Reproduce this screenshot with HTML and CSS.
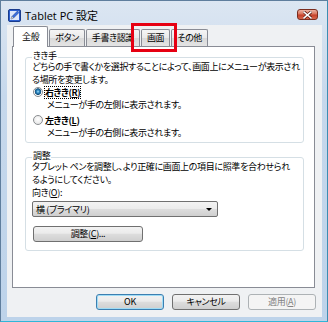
FILE: index.html
```html
<!DOCTYPE html>
<html lang="ja">
<head>
  <meta charset="UTF-8" />
  <title>Tablet PC 設定</title>
  <link rel="stylesheet" href="styles.css">
</head>
<body>
  <div class="window">
    <div class="titlebar">
      <svg class="app-icon" width="13" height="13" viewBox="0 0 13 13">
        <rect x="0.5" y="0.5" width="12" height="12" rx="1.5" fill="#2c5fcf" stroke="#1a3c8c"/>
        <rect x="2" y="2" width="9" height="9" fill="#dfe8fb"/>
        <path d="M3 10 L4 7.5 L9.5 2 L11 3.5 L5.5 9 Z" fill="#3a6fe0" stroke="#1a3c8c" stroke-width="0.6"/>
        <path d="M3 10 L4 7.5 L5.5 9 Z" fill="#f3e2b0"/>
      </svg>
      <span class="title">Tablet PC 設定</span>
      <div class="close">
        <svg width="9" height="8" viewBox="0 0 9 8">
          <path d="M1 1 L8 7 M8 1 L1 7" stroke="#5a1a10" stroke-width="3" stroke-linecap="square"/>
          <path d="M1 1 L8 7 M8 1 L1 7" stroke="#fff" stroke-width="1.6" stroke-linecap="square"/>
        </svg>
      </div>
    </div>

    <div class="client">
      <div class="tabs">
        <div class="tab active">全般</div>
        <div class="tab">ボタン</div>
        <div class="tab">手書き認識</div>
        <div class="tab">画面</div>
        <div class="tab">その他</div>
      </div>

      <div class="panel">
        <fieldset class="group">
          <legend>きき手</legend>
          <p class="text first">どちらの手で書くかを選択することによって、画面上にメニューが表示され<br>る場所を変更します。</p>
          <div class="radio">
            <span class="dot checked"></span>
            <span class="radio-label focused">右きき(<u>R</u>)</span>
          </div>
          <p class="desc">メニューが手の左側に表示されます。</p>
          <div class="radio second">
            <span class="dot"></span>
            <span class="radio-label">左きき(<u>L</u>)</span>
          </div>
          <p class="desc">メニューが手の右側に表示されます。</p>
        </fieldset>

        <fieldset class="group adjust">
          <legend>調整</legend>
          <p class="text first">タブレット ペンを調整し、より正確に画面上の項目に照準を合わせられ<br>るようにしてください。</p>
          <p class="text">向き(<u>O</u>):</p>
          <div class="select">
            <span>横 (プライマリ)</span>
            <span class="arrow"></span>
          </div>
          <div class="btn calibrate">調整(<u>C</u>)...</div>
        </fieldset>
      </div>

      <div class="actions">
        <div class="btn default">OK</div>
        <div class="btn">キャンセル</div>
        <div class="btn disabled">適用(<u>A</u>)</div>
      </div>
    </div>

    <!-- red marker around the 画面 tab -->
    <div class="mark"></div>
  </div>
</body>
</html>
```

FILE: styles.css
```css
body {
  margin: 0;
  font-family: "Noto Sans CJK JP", sans-serif;
  font-size: 9px;
  letter-spacing: -0.35px;
  font-feature-settings: "palt" 1;
  font-variant-east-asian: proportional-width;
  color: #000;
}

.window {
  position: relative;
  width: 328px;
  height: 322px;
  box-sizing: border-box;
  border: 1px solid #5f7e9d;
  border-right-color: #3d8db2;
  border-bottom-color: #2fb6d8;
  background: linear-gradient(#dce6f2, #c6d8ec 30%, #bdd3ea);
  padding: 0 5px 4px 6px;
  display: flex;
  flex-direction: column;
}

.titlebar {
  height: 24px;
  display: flex;
  align-items: flex-start;
  padding-top: 8px;
  box-sizing: border-box;
}

.app-icon {
  margin-left: 1px;
}

.title {
  margin-left: 4px;
  font-family: "Open Sans", "Noto Sans CJK JP", sans-serif;
  font-size: 11px;
  line-height: 13px;
  letter-spacing: normal;
  font-feature-settings: normal;
}

.close {
  margin-left: auto;
  margin-right: 4px;
  width: 21px;
  height: 11px;
  box-sizing: border-box;
  border: 1px solid #7a2d1f;
  border-radius: 3px;
  background: linear-gradient(#edb3a3, #d9735b 45%, #c4402a 55%, #d8654a);
  display: flex;
  align-items: center;
  justify-content: center;
}

.client {
  flex: 1;
  background: #eff1f3;
  padding: 1px 7px 0 5px;
  display: flex;
  flex-direction: column;
}

/* tab strip */
.tabs {
  display: flex;
  align-items: flex-end;
  height: 20px;
  padding-left: 1px;
}

.tab {
  height: 17px;
  box-sizing: border-box;
  border: 1px solid #898c95;
  border-bottom: none;
  border-radius: 2px 2px 0 0;
  padding: 0 5px;
  line-height: 15px;
  background: linear-gradient(#f5f5f5, #e9e9e9 50%, #d9d9d9 51%, #e4e4e4);
  margin-left: 1px;
}

.tab.active {
  height: 21px;
  margin-bottom: -1px;
  margin-left: 0;
  background: #fff;
  position: relative;
  z-index: 1;
  padding: 2px 8px 0;
}

.panel {
  height: 242px;
  box-sizing: border-box;
  border: 1px solid #898c95;
  background: #fff;
  padding: 3px 10px 0 12px;
}

.group {
  margin: 0;
  min-width: 0;
  border: 1px solid #d5dfe5;
  border-radius: 3px;
  padding: 0 6px 3px 6px;
}

.group legend {
  padding: 0 1px 3px;
  line-height: 11px;
}

.group.adjust {
  margin-top: 7px;
  padding-bottom: 8px;
}

.text,
.desc {
  margin: 0;
  line-height: 13px;
  white-space: nowrap;
}

.text.first {
  margin-top: -4px;
}

.desc {
  padding-left: 15px;
}

.radio {
  display: flex;
  align-items: center;
  height: 12px;
  margin-left: 1px;
}

.radio.second {
  margin-top: 3px;
}

.dot {
  width: 10px;
  height: 10px;
  box-sizing: border-box;
  border: 1px solid #8a8d90;
  border-radius: 50%;
  background: radial-gradient(circle at 50% 40%, #fff, #e0e0e0);
  margin-right: 2px;
}

.dot.checked {
  background: radial-gradient(circle at 50% 45%, #a8e3fb 0, #2c86c0 1.5px, #14507c 3px, #fff 3.6px, #e2e2e2);
}

.radio-label {
  font-weight: bold;
  line-height: 11px;
}

.radio-label.focused {
  outline: 1px dotted #000;
}

.select {
  width: 186px;
  height: 16px;
  box-sizing: border-box;
  margin-top: 2px;
  border: 1px solid #707070;
  border-radius: 2px;
  background: linear-gradient(#f3f3f3, #ebebeb 50%, #dddddd 51%, #cfcfcf);
  display: flex;
  align-items: center;
  justify-content: space-between;
  padding: 0 5px 0 3px;
}

.arrow {
  width: 0;
  height: 0;
  border-left: 3px solid transparent;
  border-right: 3px solid transparent;
  border-top: 3px solid #000;
}

.btn {
  height: 16px;
  box-sizing: border-box;
  border: 1px solid #707070;
  border-radius: 3px;
  background: linear-gradient(#f2f2f2, #ebebeb 45%, #dddddd 50%, #cfcfcf);
  display: flex;
  align-items: center;
  justify-content: center;
  line-height: 12px;
}

.btn.calibrate {
  width: 110px;
  margin-top: 9px;
  margin-left: 1px;
}

.actions {
  display: flex;
  justify-content: flex-end;
  gap: 8px;
  margin-top: 6px;
  margin-right: -1px;
}

.actions .btn {
  width: 68px;
}

.btn.default {
  border-color: #3c7fb1;
  box-shadow: inset 0 0 0 1px #9fdcf5;
}

.btn.disabled {
  border-color: #adb2b5;
  background: #f4f4f4;
  color: #838383;
}

.mark {
  position: absolute;
  left: 130px;
  top: 22px;
  width: 46px;
  height: 29px;
  box-sizing: border-box;
  border: 3px solid #e60012;
}
```
